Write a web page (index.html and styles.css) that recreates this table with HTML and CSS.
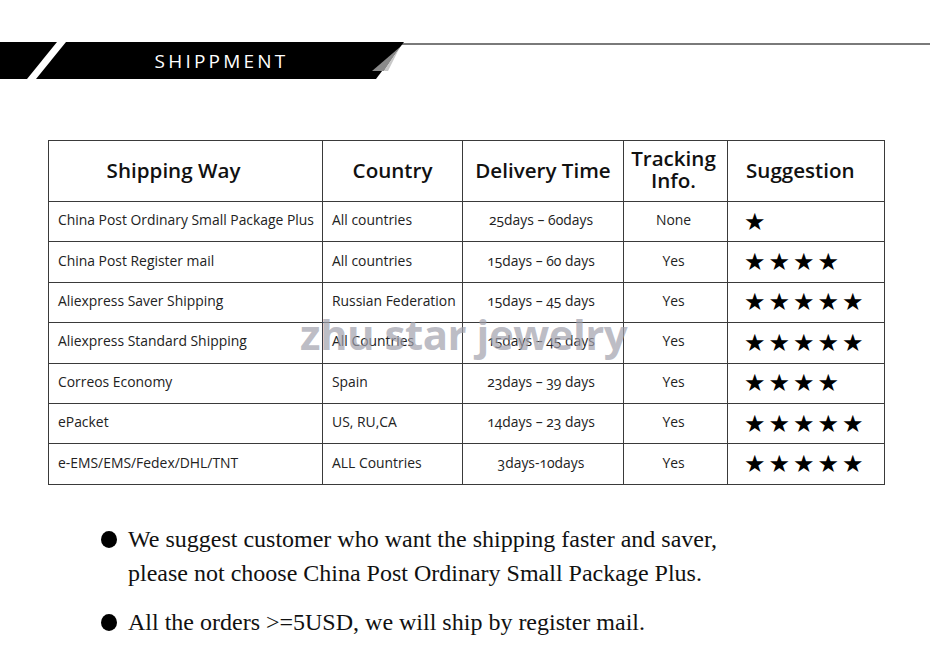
FILE: index.html
```html
<!DOCTYPE html>
<html>
<head>
<meta charset="utf-8">
<link rel="stylesheet" href="styles.css">
</head>
<body>
<div class="header">
  <div class="banner">
    <svg class="banner-shape" width="405" height="37" viewBox="0 0 405 37">
      <polygon points="0,0 404,0 376,37 0,37" fill="#000"/>
      <polygon points="57,0 66,0 36,37 27,37" fill="#fff"/>
      <polygon points="400,5 384,29 372,29" fill="#8a8a8a"/>
      <polygon points="400,5 392,17 384,29 388,29" fill="#c8c8c8"/>
    </svg>
    <span class="banner-title">SHIPPMENT</span>
  </div>
  <div class="rule"></div>
</div>

<div class="table-wrap">
  <table class="ship">
    <colgroup>
      <col class="c1"><col class="c2"><col class="c3"><col class="c4"><col class="c5">
    </colgroup>
    <thead>
      <tr class="head-row">
        <th class="way">Shipping Way</th>
        <th>Country</th>
        <th>Delivery Time</th>
        <th class="track">Tracking<br>Info.</th>
        <th class="sugg">Suggestion</th>
      </tr>
    </thead>
    <tbody>
      <tr><td>China Post Ordinary Small Package Plus</td><td>All countries</td><td class="ctr">25days – 60days</td><td class="ctr">None</td><td class="stars">★</td></tr>
      <tr><td>China Post Register mail</td><td>All countries</td><td class="ctr">15days – 60 days</td><td class="ctr">Yes</td><td class="stars">★★★★</td></tr>
      <tr><td>Aliexpress Saver Shipping</td><td>Russian Federation</td><td class="ctr">15days – 45 days</td><td class="ctr">Yes</td><td class="stars">★★★★★</td></tr>
      <tr><td>Aliexpress Standard Shipping</td><td>All Countries</td><td class="ctr">15days – 45 days</td><td class="ctr">Yes</td><td class="stars">★★★★★</td></tr>
      <tr><td>Correos Economy</td><td>Spain</td><td class="ctr">23days – 39 days</td><td class="ctr">Yes</td><td class="stars">★★★★</td></tr>
      <tr><td>ePacket</td><td>US, RU,CA</td><td class="ctr">14days – 23 days</td><td class="ctr">Yes</td><td class="stars">★★★★★</td></tr>
      <tr><td>e-EMS/EMS/Fedex/DHL/TNT</td><td>ALL Countries</td><td class="ctr">3days-10days</td><td class="ctr">Yes</td><td class="stars">★★★★★</td></tr>
    </tbody>
  </table>
  <div class="watermark">zhu star jewelry</div>
</div>

<ul class="notes">
  <li>We suggest customer who want the shipping faster and saver,<br>please not choose China Post Ordinary Small Package Plus.</li>
  <li>All the orders &gt;=5USD, we will ship by register mail.</li>
</ul>
</body>
</html>
```

FILE: styles.css
```css
html, body {
  margin: 0;
  padding: 0;
  background: #fff;
}
body {
  width: 930px;
  height: 669px;
  overflow: hidden;
  font-family: "Open Sans", "Liberation Sans", sans-serif;
  color: #222;
}
.header {
  display: flex;
  align-items: flex-start;
  margin-top: 42px;
  height: 37px;
}
.banner {
  position: relative;
  width: 405px;
  height: 37px;
  flex: none;
  display: flex;
  align-items: center;
  justify-content: center;
}
.banner-shape {
  position: absolute;
  left: 0;
  top: 0;
}
.banner-title {
  position: relative;
  top: 1px;
  color: #fff;
  font-family: "Open Sans", "Liberation Sans", sans-serif;
  font-size: 19px;
  letter-spacing: 3.2px;
  padding-left: 38px;
  line-height: 1;
}
.rule {
  flex: 1;
  margin-top: 1px;
  border-top: 2px solid #7a7a7a;
  margin-left: -4px;
}
.table-wrap {
  position: relative;
  margin: 61px 0 0 48px;
  width: 836px;
}
.ship {
  border-collapse: collapse;
  width: 836px;
  table-layout: fixed;
  font-variant-numeric: oldstyle-nums;
}
.c1 { width: 274px; }
.c2 { width: 140px; }
.c3 { width: 161px; }
.c4 { width: 104px; }
.c5 { width: 157px; }
.ship tr {
  height: 40.4px;
}
.ship tr.head-row {
  height: 61px;
}
.ship th, .ship td {
  border: 1px solid #3a3a3a;
  padding: 0;
}
.ship th {
  font-weight: 600;
  font-size: 20.6px;
  color: #111;
  text-align: center;
  line-height: 24px;
  padding-bottom: 2px;
}
.ship th.way {
  padding-right: 24px;
}
.ship th.track {
  line-height: 22px;
  padding-right: 4px;
  padding-bottom: 4px;
}
.ship th.sugg {
  text-align: left;
  padding-left: 18px;
}
.ship td {
  font-size: 13.9px;
  line-height: 18px;
  padding-left: 9px;
  padding-bottom: 3px;
  white-space: nowrap;
  color: #222;
}
.ship td.ctr {
  text-align: center;
  padding-left: 0;
  padding-right: 4px;
}
.ship td.stars {
  font-family: "DejaVu Sans", sans-serif;
  font-size: 24px;
  letter-spacing: 3px;
  padding-left: 16px;
  padding-bottom: 0;
  color: #000;
  line-height: 24px;
}
.watermark {
  position: absolute;
  left: 252px;
  top: 173px;
  font-family: "Open Sans", "Liberation Sans", sans-serif;
  font-weight: 700;
  font-size: 42px;
  letter-spacing: -0.5px;
  color: rgba(160, 160, 172, 0.7);
  line-height: 1;
  pointer-events: none;
}
.notes {
  list-style: none;
  margin: 37px 0 0 0;
  padding: 0 0 0 100px;
  font-family: "Liberation Serif", "DejaVu Serif", serif;
  font-size: 24px;
  line-height: 34px;
  color: #111;
}
.notes li {
  position: relative;
  padding-left: 28px;
  margin-bottom: 15px;
}
.notes li::before {
  content: "";
  position: absolute;
  left: 1px;
  top: 9px;
  width: 16px;
  height: 17px;
  border-radius: 50%;
  background: #000;
}
```
